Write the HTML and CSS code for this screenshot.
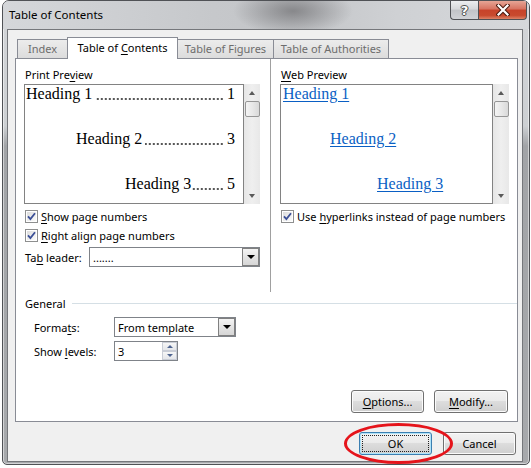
FILE: index.html
```html
<!DOCTYPE html>
<html>
<head>
<meta charset="utf-8">
<title>Table of Contents</title>
<link rel="stylesheet" href="styles.css">
</head>
<body>
<div class="window">
  <div class="titlebar">
    <span class="title">Table of Contents</span>
    <div class="caption-btns">
      <div class="cbtn help">?</div>
      <div class="cbtn close">
        <svg width="14" height="12" viewBox="0 0 14 12"><path d="M2.5 1.5 L11.5 10.5 M11.5 1.5 L2.5 10.5" stroke="#4a1a10" stroke-width="4.2" stroke-linecap="square"/><path d="M2.5 1.5 L11.5 10.5 M11.5 1.5 L2.5 10.5" stroke="#fff" stroke-width="2.2" stroke-linecap="square"/></svg>
      </div>
    </div>
  </div>
  <div class="client">
    <div class="tabs">
      <div class="tab t-index">Index</div>
      <div class="tab active t-toc">Table of <u>C</u>ontents</div>
      <div class="tab t-fig">Table of Figures</div>
      <div class="tab t-auth">Table of Authorities</div>
    </div>
    <div class="panel">
      <div class="cols">
        <div class="col col-left">
          <div class="label">Print Pre<u>v</u>iew</div>
          <div class="preview-wrap">
            <div class="preview print">
              <div class="toc-line l1"><span>Heading 1</span><span class="lead"></span><span>1</span></div>
              <div class="toc-line l2"><span>Heading 2</span><span class="lead"></span><span>3</span></div>
              <div class="toc-line l3"><span>Heading 3</span><span class="lead"></span><span>5</span></div>
            </div>
            <div class="vscroll">
              <div class="sbtn"><span class="tri-up"></span></div>
              <div class="thumb"></div>
              <div class="sfill"></div>
              <div class="sbtn"><span class="tri-down"></span></div>
            </div>
          </div>
          <div class="check first">
            <svg class="cb" width="13" height="13" viewBox="0 0 13 13"><defs><linearGradient id="cbg" x1="0" y1="0" x2="1" y2="1"><stop offset="0" stop-color="#dcdcdc"/><stop offset="1" stop-color="#fbfbfb"/></linearGradient></defs><rect x="0.5" y="0.5" width="12" height="12" fill="#fff" stroke="#8e8f8f"/><rect x="2" y="2" width="9" height="9" fill="url(#cbg)"/><path d="M3 6.3 L5.4 9 L10 3.2" fill="none" stroke="#3b4f96" stroke-width="1.8"/></svg>
            <span><u>S</u>how page numbers</span>
          </div>
          <div class="check">
            <svg class="cb" width="13" height="13" viewBox="0 0 13 13"><rect x="0.5" y="0.5" width="12" height="12" fill="#fff" stroke="#8e8f8f"/><rect x="2" y="2" width="9" height="9" fill="url(#cbg)"/><path d="M3 6.3 L5.4 9 L10 3.2" fill="none" stroke="#3b4f96" stroke-width="1.8"/></svg>
            <span><u>R</u>ight align page numbers</span>
          </div>
          <div class="field-row tab-row">
            <span class="flabel-tab">Ta<u>b</u> leader:</span>
            <div class="combo combo-tab"><span class="combo-text">.......</span><span class="drop"><span class="tri-down dark"></span></span></div>
          </div>
        </div>
        <div class="divider"></div>
        <div class="col col-right">
          <div class="label"><u>W</u>eb Preview</div>
          <div class="preview-wrap">
            <div class="preview web">
              <div class="web-line w1"><span class="link">Heading 1</span></div>
              <div class="web-line w2"><span class="link">Heading 2</span></div>
              <div class="web-line w3"><span class="link">Heading 3</span></div>
            </div>
            <div class="vscroll">
              <div class="sbtn"><span class="tri-up"></span></div>
              <div class="thumb"></div>
              <div class="sfill"></div>
              <div class="sbtn"><span class="tri-down"></span></div>
            </div>
          </div>
          <div class="check first">
            <svg class="cb" width="13" height="13" viewBox="0 0 13 13"><rect x="0.5" y="0.5" width="12" height="12" fill="#fff" stroke="#8e8f8f"/><rect x="2" y="2" width="9" height="9" fill="url(#cbg)"/><path d="M3 6.3 L5.4 9 L10 3.2" fill="none" stroke="#3b4f96" stroke-width="1.8"/></svg>
            <span>Use <u>h</u>yperlinks instead of page numbers</span>
          </div>
        </div>
      </div>
      <div class="group-head"><span>General</span><span class="rule"></span></div>
      <div class="field-row g-row g-first">
        <span class="glabel">Forma<u>t</u>s:</span>
        <div class="combo combo-fmt"><span class="combo-text">From template</span><span class="drop"><span class="tri-down dark"></span></span></div>
      </div>
      <div class="field-row g-row g-second">
        <span class="glabel">Show <u>l</u>evels:</span>
        <div class="spinner"><span class="spin-text">3</span><span class="spin-btns"><span class="spin-b"><span class="tri-up blue"></span></span><span class="spin-b"><span class="tri-down blue"></span></span></span></div>
      </div>
      <div class="panel-btns">
        <button class="btn b-options"><u>O</u>ptions...</button>
        <button class="btn b-modify"><u>M</u>odify...</button>
      </div>
    </div>
    <div class="footer">
      <div class="ok-wrap"><button class="btn ok"><span class="focus">OK</span></button></div>
      <button class="btn b-cancel">Cancel</button>
    </div>
  </div>
</div>
</body>
</html>
```

FILE: styles.css
```css
* { box-sizing: border-box; }
html, body { margin: 0; padding: 0; background: #fff; }
body {
  font-family: "Noto Sans", "Open Sans", sans-serif;
  font-size: 11px;
  color: #000;
}
u { text-decoration: underline; text-underline-offset: 2px; }

.window {
  margin-left: 2px;
  width: 528px;
  height: 465px;
  border: 1px solid #505256;
  border-radius: 7px 7px 5px 5px;
  background: linear-gradient(to bottom, #d3d5d8 0, #cdd0d3 125px, #a2a4a7 145px, #a7a9ac 100%);
  box-shadow: inset 0 0 0 1px rgba(255,255,255,0.5);
  display: flex;
  flex-direction: column;
  overflow: hidden;
}

.titlebar {
  height: 28px;
  flex: none;
  display: flex;
  align-items: flex-start;
  padding-left: 6px;
  background:
    radial-gradient(ellipse 60px 24px at 290px 10px, rgba(115,115,118,0.75), rgba(115,115,118,0)),
    linear-gradient(to right, #d5d7da 0%, #c6c8cb 40%, #c3c5c8 55%, #cfd1d4 75%, #d6d8db 100%);
}
.title {
  font-size: 11.5px;
  line-height: 16px;
  margin-top: 6px;
  color: #000;
}
.caption-btns {
  margin-left: auto;
  margin-right: 2px;
  display: flex;
  height: 19px;
}
.cbtn {
  height: 19px;
  border: 1px solid #4f5155;
  border-top: none;
  display: flex;
  align-items: center;
  justify-content: center;
}
.help {
  width: 28px;
  border-right: none;
  border-radius: 0 0 0 4px;
  background: linear-gradient(#eceef0 0%, #d6d8db 45%, #c2c4c8 50%, #d0d2d6 100%);
  color: #fff;
  font-family: "DejaVu Sans", sans-serif;
  font-weight: bold;
  font-size: 13px;
  text-shadow: 0 0 1px #333, 1px 0 0 #555, -1px 0 0 #555, 0 1px 0 #555, 0 -1px 0 #555;
}
.close {
  width: 49px;
  border-radius: 0 0 4px 0;
  background: linear-gradient(#e6a595 0%, #d77260 45%, #c7432a 50%, #c84a2e 80%, #dd8266 100%);
}

.client {
  margin: 0 6px 0 4px;
  height: 433px;
  flex: none;
  border: 1px solid #75777b;
  background: #f0f0f0;
  padding-top: 7px;
  display: flex;
  flex-direction: column;
}

.tabs {
  display: flex;
  align-items: flex-start;
  height: 22px;
  margin: 0 0 -1px 9px;
  position: relative;
  z-index: 1;
}
.tab {
  margin-top: 2px;
  height: 19px;
  border: 1px solid #898c95;
  border-bottom: none;
  background: linear-gradient(#ececec, #dcdcdc);
  color: #6d6d6d;
  line-height: 17px;
  text-align: center;
  white-space: nowrap;
}
.tab + .tab { margin-left: -1px; }
.tab.active {
  margin-top: 0;
  height: 22px;
  background: #fff;
  color: #000;
  line-height: 20px;
  position: relative;
  z-index: 2;
}
.t-index { width: 51px; }
.t-toc { width: 111px; }
.t-fig { width: 97px; }
.t-auth { width: 116px; }

.panel {
  margin-left: 7px;
  width: 503px;
  height: 364px;
  flex: none;
  border: 1px solid #898c95;
  background: #fff;
  display: flex;
  flex-direction: column;
  padding: 0 9px 8px 8px;
}
.cols { display: flex; height: 233px; flex: none; }
.col { padding-top: 8px; display: flex; flex-direction: column; }
.col-left { width: 236px; }
.col-right { width: 229px; margin-right: -1px; }
.divider { width: 1px; background: #a0a0a0; margin: 0 9px 0 10px; }

.label { line-height: 16px; height: 16px; margin-left: 1px; }

.preview-wrap { display: flex; margin-top: 1px; height: 120px; flex: none; }
.preview {
  flex: 1;
  min-width: 0;
  border: 1px solid #828282;
  font-family: "Liberation Serif", "Times New Roman", serif;
  font-size: 16px;
  line-height: 18px;
  overflow: hidden;
  padding-top: 0;
}
.print { padding: 0 8px 0 1px; }
.toc-line { display: flex; white-space: nowrap; margin-bottom: 27px; height: 18px; }
.lead {
  flex: 1;
  min-width: 0;
  height: 18px;
  margin: 0 3px 0 3px;
  background-image: radial-gradient(circle at 2px 2px, #222 0.6px, rgba(0,0,0,0) 1.05px);
  background-size: 4px 4px;
  background-repeat: repeat-x;
  background-position: right 0 top 12px;
}
.l3 .lead { margin-left: 1px; }
.l2 { padding-left: 50px; }
.l3 { padding-left: 99px; }

.web { padding-left: 2px; }
.web-line { margin-bottom: 27px; white-space: nowrap; }
.link { color: #0a5fc4; text-decoration: underline; text-underline-offset: 2px; }
.w2 { padding-left: 47px; }
.w3 { padding-left: 94px; }

.vscroll {
  width: 16px;
  flex: none;
  background: linear-gradient(to right, #e6e6e6, #efefef 50%, #e8e8e8);
  display: flex;
  flex-direction: column;
  align-items: center;
}
.sbtn { height: 17px; width: 16px; display: flex; align-items: center; justify-content: center; }
.sfill { flex: 1; }
.thumb {
  width: 15px;
  height: 16px;
  border: 1px solid #969696;
  border-radius: 2px;
  background: linear-gradient(to right, #f4f4f4, #e8e8e8 50%, #d9d9d9);
}
.tri-up, .tri-down { width: 0; height: 0; border-left: 3.5px solid transparent; border-right: 3.5px solid transparent; }
.tri-up { border-bottom: 4px solid #5a5a5a; }
.tri-down { border-top: 4px solid #5a5a5a; }
.tri-down.dark { border-top-color: #000; border-left-width: 4px; border-right-width: 4px; }
.tri-up.blue { border-bottom: 3px solid #4f6490; border-left-width: 3px; border-right-width: 3px; }
.tri-down.blue { border-top: 3px solid #4f6490; border-left-width: 3px; border-right-width: 3px; }

.check { display: flex; align-items: center; height: 19px; margin-left: 1px; gap: 3px; white-space: nowrap; }
.check.first { margin-top: 3px; }
.cb { flex: none; }

.field-row { display: flex; align-items: center; height: 20px; flex: none; white-space: nowrap; }
.tab-row { margin-top: 2px; }
.flabel-tab { width: 64px; margin-left: 1px; }

.combo {
  height: 20px;
  border: 1px solid #7f8389;
  background: #fff;
  display: flex;
  align-items: center;
  padding-left: 3px;
}
.combo-tab { width: 171px; }
.combo-fmt { width: 122px; }
.combo-text { flex: 1; }
.drop {
  width: 17px;
  height: 18px;
  border: 1px solid #808080;
  background: linear-gradient(#f4f4f4, #e4e4e4 50%, #d6d6d6);
  display: flex;
  align-items: center;
  justify-content: center;
}

.group-head { display: flex; align-items: center; height: 16px; margin-top: 3px; margin-left: 1px; flex: none; }
.rule { flex: 1; height: 1px; background: #d5dfe5; margin-left: 6px; margin-right: -9px; }
.g-row { margin-left: 10px; }
.g-first { margin-top: 6px; }
.g-second { margin-top: 4px; }
.glabel { width: 80px; }

.spinner {
  width: 64px;
  height: 20px;
  border: 1px solid #7f8389;
  background: #fff;
  display: flex;
  align-items: center;
  padding-left: 3px;
}
.spin-text { flex: 1; }
.spin-btns { display: flex; flex-direction: column; width: 15px; height: 18px; }
.spin-b {
  height: 9px;
  border: 1px solid #c9cdd6;
  background: linear-gradient(#f6f6f6, #e4e6ea);
  display: flex;
  align-items: center;
  justify-content: center;
}

.panel-btns { margin-top: auto; display: flex; justify-content: flex-end; gap: 10px; }

.btn {
  height: 23px;
  border: 1px solid #707070;
  border-radius: 3px;
  background: linear-gradient(#f2f2f2 0%, #ebebeb 45%, #dddddd 50%, #cfcfcf 100%);
  box-shadow: inset 0 0 0 1px #fbfbfb;
  font: inherit;
  color: #000;
  padding: 0;
  text-align: center;
}
.b-options { width: 73px; }
.b-modify { width: 74px; }
.b-cancel { width: 73px; }

.footer { display: flex; justify-content: flex-end; gap: 11px; margin-top: 10px; padding-right: 6px; }
.ok-wrap { position: relative; }
.ok {
  width: 73px;
  border-color: #3c7fb1;
  box-shadow: inset 0 0 0 1px #aee3f9;
  display: flex;
  padding: 2px;
}
.focus {
  flex: 1;
  border: 1px dotted #222;
  display: flex;
  align-items: center;
  justify-content: center;
}
.ok-wrap::after {
  content: "";
  position: absolute;
  left: -15px;
  top: -9px;
  width: 103px;
  height: 35px;
  border: 3px solid #e5141b;
  border-radius: 50%;
}
```
